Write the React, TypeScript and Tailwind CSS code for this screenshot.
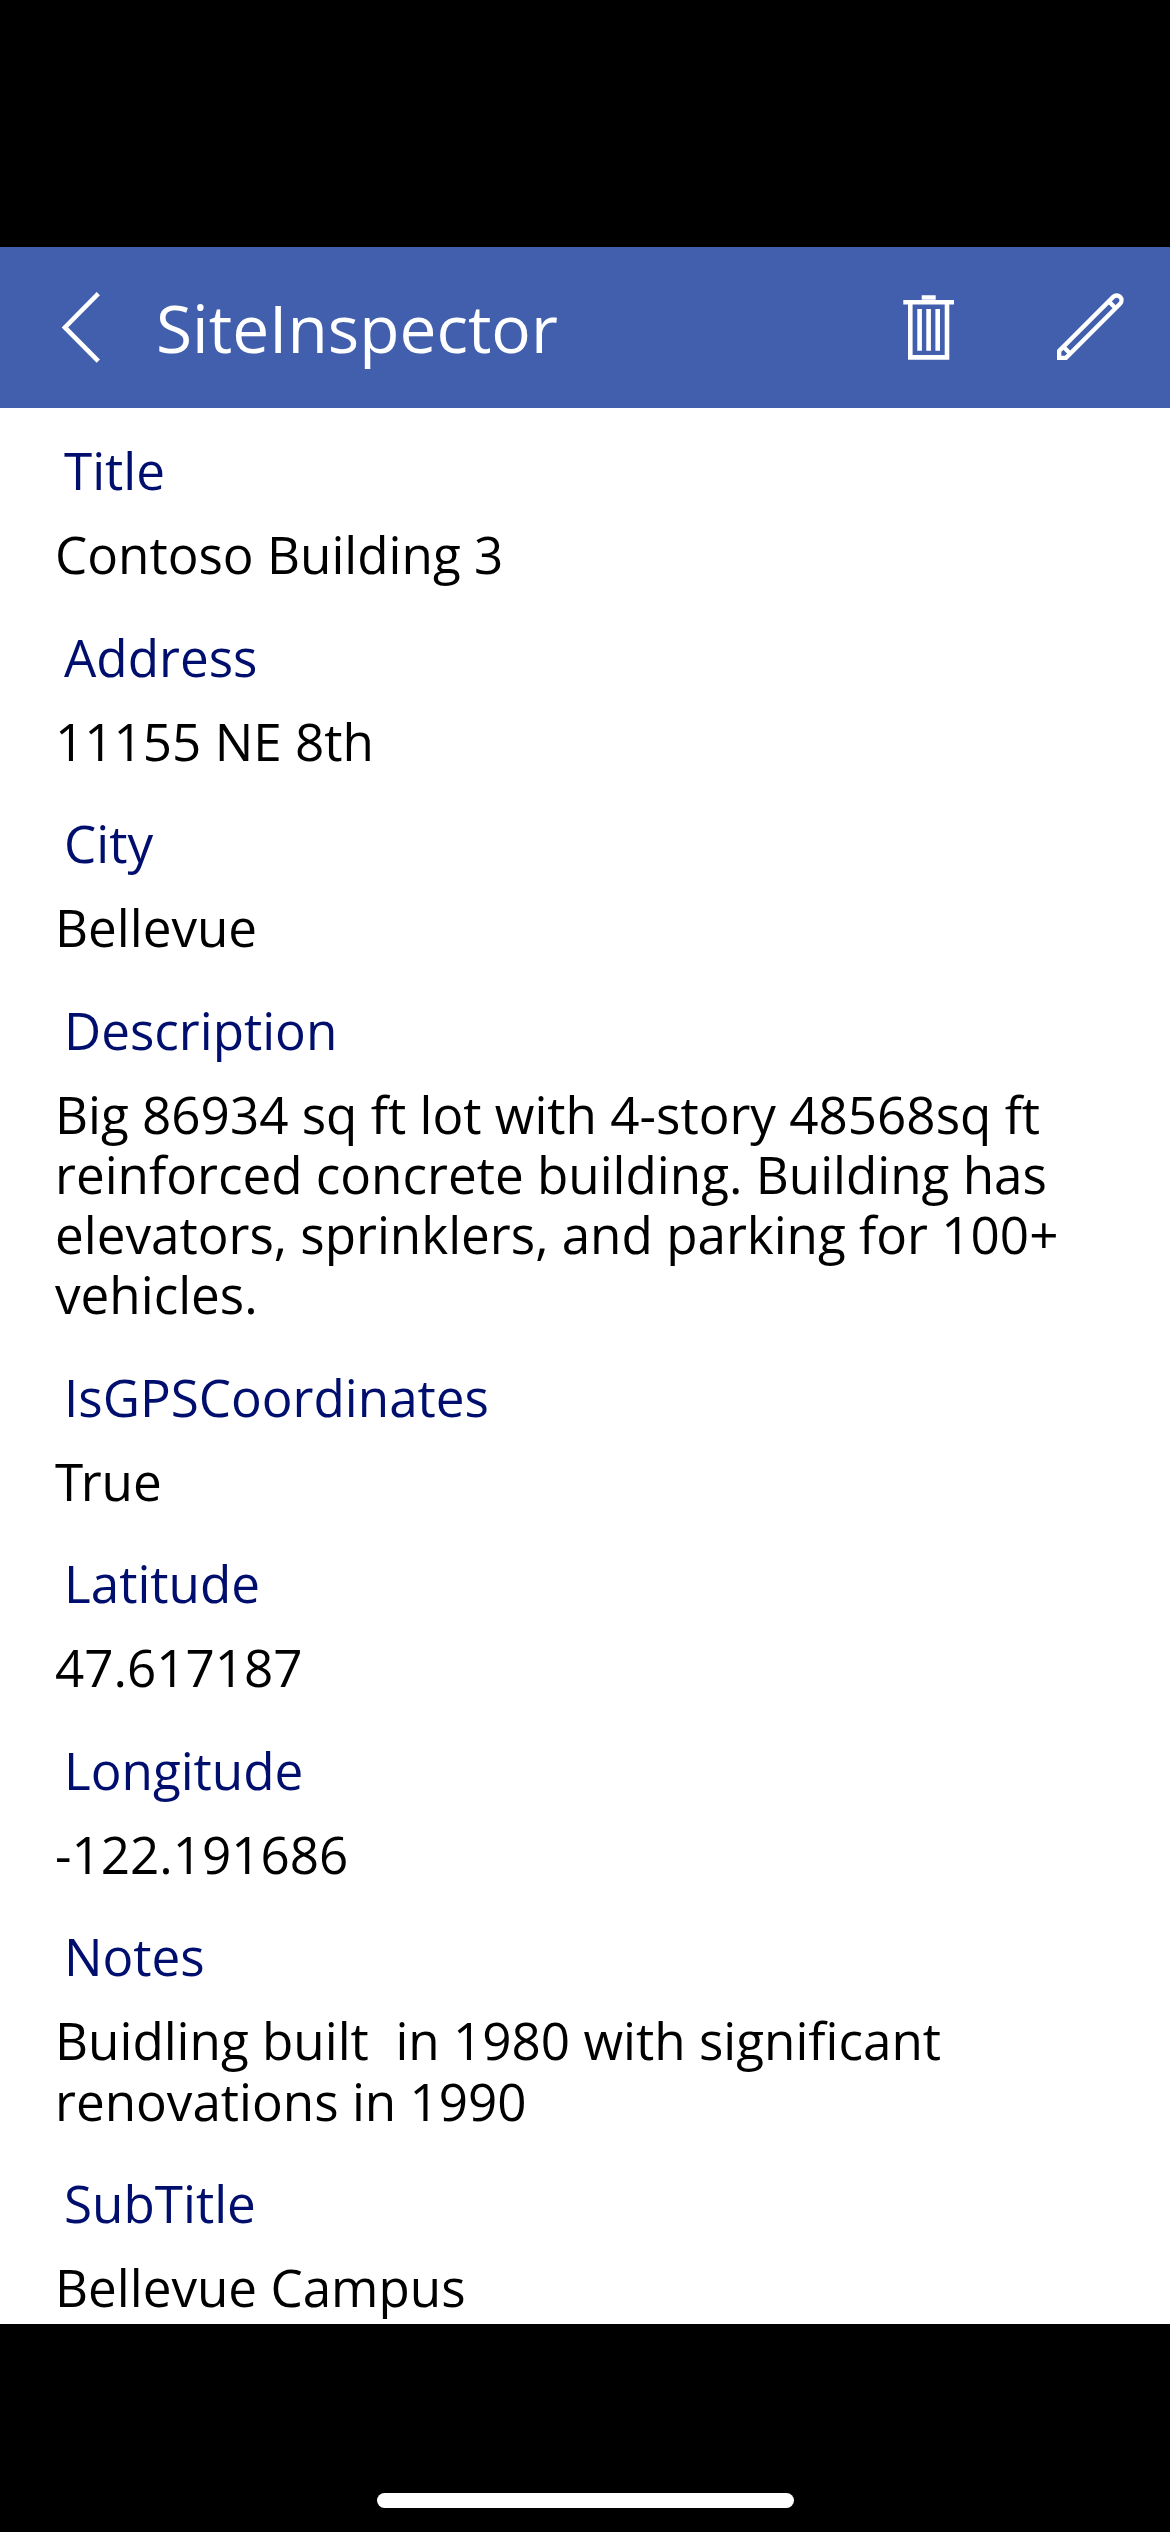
import React from "react";

type Field = { label: string; lines: string[]; tightInitial?: boolean };

const fields: Field[] = [
  { label: "Title", lines: ["Contoso Building 3"] },
  { label: "Address", lines: ["11155 NE 8th"] },
  { label: "City", lines: ["Bellevue"] },
  {
    label: "Description",
    lines: [
      "Big 86934 sq ft lot with 4-story 48568sq ft",
      "reinforced concrete building. Building has",
      "elevators, sprinklers, and parking for 100+",
      "vehicles.",
    ],
  },
  { label: "IsGPSCoordinates", lines: ["True"], tightInitial: true },
  { label: "Latitude", lines: ["47.617187"] },
  { label: "Longitude", lines: ["-122.191686"] },
  { label: "Notes", lines: ["Buidling built  in 1980 with significant", "renovations in 1990"] },
  { label: "SubTitle", lines: ["Bellevue Campus"] },
];

export default function App() {
  return (
    <div className="flex h-[2532px] w-[1170px] flex-col overflow-hidden bg-black pt-[247px] font-['Open_Sans',sans-serif]">
      <header className="flex h-[161px] shrink-0 items-start bg-[#425fad] text-white">
        <svg className="ml-[61px] mt-[44px] h-[74px] w-[40px]" viewBox="0 0 40 74" fill="none" stroke="currentColor" strokeWidth="4.6">
          <path d="M37.3 2.6L3.9 36.4L37.3 70.2" />
        </svg>
        <h1 className="ml-[55px] mt-[36px] text-[65.8px] leading-[90px]">SiteInspector</h1>
        <svg className="ml-auto mt-[48px] h-[65px] w-[52px]" viewBox="0 0 52 65" fill="none" stroke="currentColor" strokeWidth="4.6">
          <path d="M0.3 7.3H51M18.7 2.5H32.7M7.3 8V62.4H44V8M16.6 14V55.7M25.6 14V55.7M34.7 14V55.7" />
        </svg>
        <svg className="ml-[102px] mr-[46px] mt-[46px] h-[67px] w-[67px]" viewBox="562 68 201 201" fill="none" stroke="currentColor" strokeWidth="13">
          <path d="M568.5 262.5V242L730.7 79.7A14.5 14.5 0 0 1 751.3 100.3L589 262.5Z" />
          <path d="M717 93L738 114M581 229L602 250" />
        </svg>
      </header>
      <main className="h-[1916px] shrink-0 overflow-hidden bg-white pt-[32px] text-[51.2px] leading-[60.25px]">
        {fields.map((f) => (
          <section key={f.label} className="mb-[42.25px]">
            <h2 className="ml-[64px] h-[84px] text-[#000f6e]">{f.label}</h2>
            <div className="ml-[55px] whitespace-pre text-black">
              {f.lines.map((l) => (
                <p key={l} className={f.tightInitial ? "first-letter:tracking-[-2.5px]" : undefined}>
                  {l}
                </p>
              ))}
            </div>
          </section>
        ))}
      </main>
      <div className="flex grow items-end justify-center pb-[24px]">
        <div className="h-[15px] w-[417px] rounded-full bg-white" />
      </div>
    </div>
  );
}
